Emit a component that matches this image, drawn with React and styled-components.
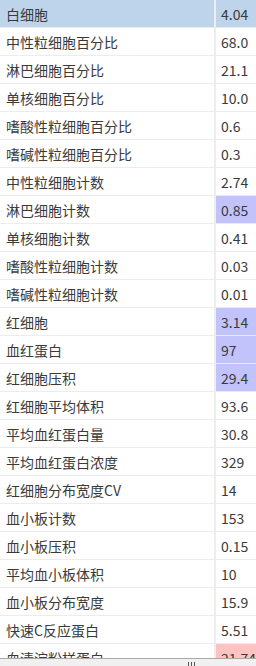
import React from 'react';
import styled, { createGlobalStyle } from 'styled-components';

const GlobalStyle = createGlobalStyle`
  html, body {
    margin: 0;
    padding: 0;
    background: #fff;
  }
`;

const rows = [
  { name: '白细胞', value: '4.04', tone: 'header' },
  { name: '中性粒细胞百分比', value: '68.0' },
  { name: '淋巴细胞百分比', value: '21.1' },
  { name: '单核细胞百分比', value: '10.0' },
  { name: '嗜酸性粒细胞百分比', value: '0.6' },
  { name: '嗜碱性粒细胞百分比', value: '0.3' },
  { name: '中性粒细胞计数', value: '2.74' },
  { name: '淋巴细胞计数', value: '0.85', tone: 'low' },
  { name: '单核细胞计数', value: '0.41' },
  { name: '嗜酸性粒细胞计数', value: '0.03' },
  { name: '嗜碱性粒细胞计数', value: '0.01' },
  { name: '红细胞', value: '3.14', tone: 'low' },
  { name: '血红蛋白', value: '97', tone: 'low' },
  { name: '红细胞压积', value: '29.4', tone: 'low' },
  { name: '红细胞平均体积', value: '93.6' },
  { name: '平均血红蛋白量', value: '30.8' },
  { name: '平均血红蛋白浓度', value: '329' },
  { name: '红细胞分布宽度CV', value: '14' },
  { name: '血小板计数', value: '153' },
  { name: '血小板压积', value: '0.15' },
  { name: '平均血小板体积', value: '10' },
  { name: '血小板分布宽度', value: '15.9' },
  { name: '快速C反应蛋白', value: '5.51' },
  { name: '血清淀粉样蛋白', value: '21.74', tone: 'high' },
];

const toneColors = {
  low: '#c3c3fb',
  high: '#fdc3c3',
};

const Frame = styled.div`
  width: 256px;
  height: 666px;
  display: flex;
  flex-direction: column;
  overflow: hidden;
  font-family: 'Noto Sans CJK SC', 'Noto Sans', sans-serif;
  font-size: 14px;
  color: #3a3a3a;
`;

const Viewport = styled.div`
  flex: 1;
  overflow: hidden;
`;

const Row = styled.div`
  display: grid;
  grid-template-columns: 216px 1fr;
  height: 27px;
  border-bottom: 1px solid #ececec;
  background: ${({ $header }) => ($header ? '#bed4eb' : '#fff')};
`;

const NameCell = styled.div`
  display: flex;
  align-items: center;
  padding-left: 6px;
  border-right: 2px solid #eeeeee;
  white-space: nowrap;
  line-height: 1;
`;

const ValueCell = styled.div`
  display: flex;
  align-items: center;
  padding-left: 5px;
  white-space: nowrap;
  line-height: 1;
  background: ${({ $tone }) => toneColors[$tone] || 'transparent'};
`;

const ScrollBar = styled.div`
  height: 8px;
  flex: none;
  background: #f0f0f0;
  border-top: 1px solid #a9a9a9;
  display: flex;
  justify-content: center;
  padding-left: 126px;
  box-sizing: border-box;
`;

const Grip = styled.div`
  margin-top: 3px;
  width: 7px;
  height: 5px;
  background: repeating-linear-gradient(
    to right,
    #555 0,
    #555 1px,
    transparent 1px,
    transparent 3px
  );
`;

export default function App() {
  return (
    <>
      <GlobalStyle />
      <Frame>
        <Viewport>
          {rows.map((r) => (
            <Row key={r.name} $header={r.tone === 'header'}>
              <NameCell>{r.name}</NameCell>
              <ValueCell $tone={r.tone}>{r.value}</ValueCell>
            </Row>
          ))}
        </Viewport>
        <ScrollBar>
          <Grip />
        </ScrollBar>
      </Frame>
    </>
  );
}
